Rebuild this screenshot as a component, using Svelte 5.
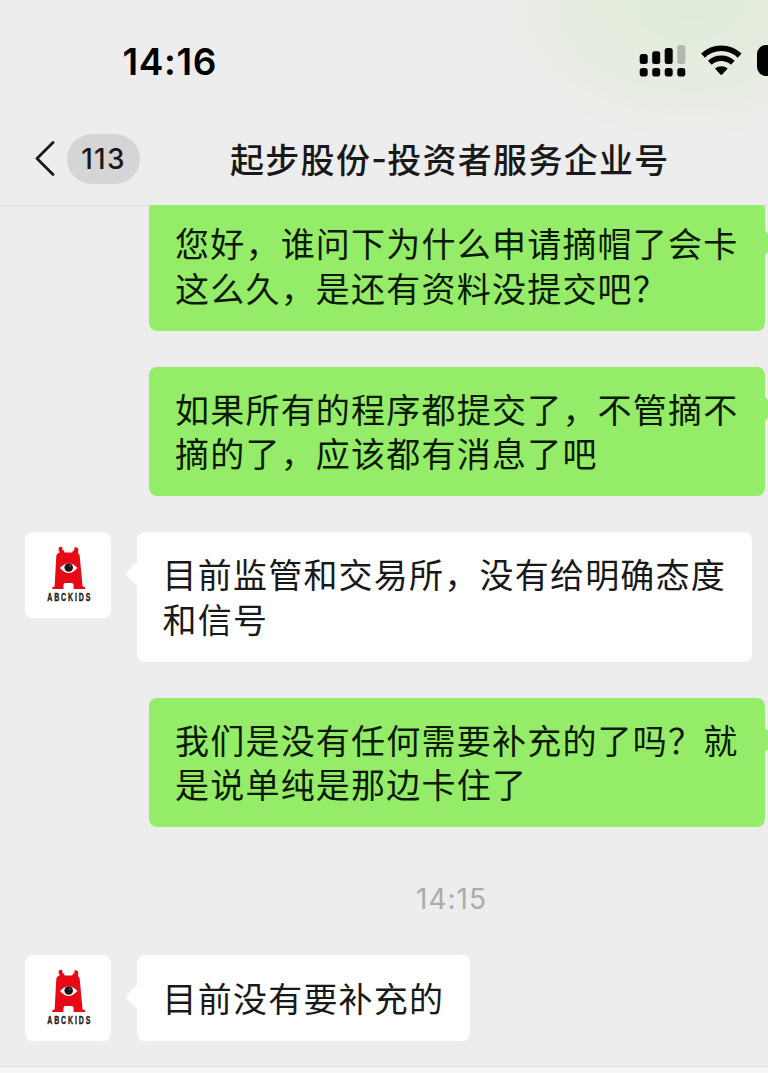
<script>
  const messages = [
    { side: 'out', lines: ['您好，谁问下为什么申请摘帽了会卡', '这么久，是还有资料没提交吧？'] },
    { side: 'out', lines: ['如果所有的程序都提交了，不管摘不', '摘的了，应该都有消息了吧'] },
    { side: 'in', lines: ['目前监管和交易所，没有给明确态度', '和信号'] },
    { side: 'out', lines: ['我们是没有任何需要补充的了吗？就', '是说单纯是那边卡住了'] },
    { side: 'time', text: '14:15' },
    { side: 'in', lines: ['目前没有要补充的'] },
  ];

  const unread = 113;
</script>

<div class="screen">
  <header>
    <div class="status">
      <span class="clock">14:16</span>
      <svg class="indicators" width="130" height="36" viewBox="0 0 130 36">
        <rect x="1.7" y="12" width="8" height="10" rx="2.5" />
        <rect x="14.2" y="9.3" width="8" height="12.7" rx="2.5" />
        <rect x="26.7" y="6" width="8" height="16" rx="2.5" />
        <rect x="39.3" y="3" width="8" height="19" rx="2.5" opacity="0.22" />
        {#each [1.7, 14.2, 26.7, 39.3] as x}
          <rect {x} y="26" width="8" height="8.5" rx="2.8" />
        {/each}
        <g fill="none" stroke="#000" stroke-width="5.6">
          <path d="M65 13.6A26.5 26.5 0 0 1 101.6 13.6" />
          <path d="M71.8 20.8A17 17 0 0 1 94.8 20.8" />
        </g>
        <path d="M76.9 26.6A9.6 9.6 0 0 1 89.7 26.6L84.2 32.4Q83.3 33.2 82.4 32.4Z" />
        <rect x="119" y="3" width="50" height="31" rx="9" />
      </svg>
    </div>
    <div class="nav">
      <svg class="back" width="20" height="36" viewBox="0 0 20 36">
        <path d="M18 1.5L2 17.5L18 33.5" />
      </svg>
      <span class="unread">{unread}</span>
      <h1>起步股份<span class="dash">-</span>投资者服务企业号</h1>
    </div>
  </header>

  <main>
    {#each messages as msg}
      {#if msg.side === 'time'}
        <div class="time">{msg.text}</div>
      {:else}
        <div class="row {msg.side}">
          {#if msg.side === 'in'}
            <svg class="avatar" width="86" height="86" viewBox="0 0 86 86">
              <g fill="#e60a17">
                <path d="M31.3 24Q31.8 20.5 35.5 20.5H50.5Q54.3 20.5 54.7 24L57.6 54.5L60 55V57H48.6V53Q48.6 51 46.5 51H40.5Q38.5 51 38.5 53V57H27.3V55.3L29.6 54.5Z" />
                <path d="M34.5 22V20Q33 18 33.8 16Q35 14 37.5 15.2Q36.5 17.5 39 18.8L40 22Z" />
                <path d="M53 22V20Q53.6 18 53 16.2Q51 14.7 49 15.8Q50.5 17.5 47.8 19L46.8 22Z" />
              </g>
              <path d="M35 36Q43.7 26.500 52.4 36Q43.7 46 35 36Z" fill="#fff" />
              <circle cx="43.7" cy="35.500" r="4.300" fill="#1b1415" />
              <circle cx="45" cy="34" r="0.8" fill="#888" />
              <text transform="translate(22.300 68.500) scale(0.700 1)" textLength="61.500">ABCKIDS</text>
            </svg>
          {/if}
          <div class="bubble">
            {#each msg.lines as line}
              <p>{line}</p>
            {/each}
          </div>
        </div>
      {/if}
    {/each}
  </main>

  <footer></footer>
</div>

<style>
  :global(body) {
    margin: 0;
    background: #ededed;
  }

  .screen {
    display: flex;
    flex-direction: column;
    width: 768px;
    height: 1073px;
    overflow: hidden;
    background: #ededed;
    color: #191919;
    font-family: Inter, 'Noto Sans CJK SC', sans-serif;
  }

  header {
    flex: none;
    box-sizing: border-box;
    height: 206px;
    border-bottom: 1px solid #dedede;
    background:
      radial-gradient(ellipse 210px 140px at 690px 5px, #dfecd9 0%, #e5ecdf 45%, rgba(237, 237, 237, 0) 100%),
      #ededed;
  }

  .status {
    display: flex;
    align-items: flex-start;
    justify-content: space-between;
    height: 86px;
    padding: 42px 0 0 122.5px;
    box-sizing: border-box;
  }

  .clock {
    color: #000;
    font-size: 37px;
    font-weight: 600;
    line-height: 40px;
    letter-spacing: 0.6px;
  }

  .nav {
    display: flex;
    align-items: center;
    height: 146px;
    padding-left: 35px;
  }

  .back {
    fill: none;
    stroke: #191919;
    stroke-width: 2.8;
    stroke-linecap: round;
    stroke-linejoin: round;
  }

  .unread {
    width: 73px;
    height: 50px;
    margin-left: 12px;
    border-radius: 25px;
    background: #d5d5d5;
    font-size: 28px;
    font-weight: 500;
    line-height: 51px;
    letter-spacing: 1.2px;
    text-align: center;
  }

  h1 {
    display: flex;
    margin: 0 0 0 90px;
    font-family: 'Noto Sans CJK SC', sans-serif;
    font-size: 34px;
    font-weight: 500;
    line-height: 50px;
    letter-spacing: 1.3px;
    white-space: nowrap;
  }

  .dash {
    width: 16px;
    font-family: Inter, sans-serif;
    text-align: center;
  }

  main {
    display: flex;
    flex: 1;
    flex-direction: column;
    gap: 36px;
    min-height: 0;
    margin-top: -5px;
    clip-path: inset(4px 0 0 0);
  }

  .row {
    display: flex;
    align-items: flex-start;
    padding-left: 25px;
  }

  .row.out {
    justify-content: flex-end;
    padding-right: 3.5px;
  }

  .avatar {
    margin-right: 25.5px;
    border-radius: 8px;
    background: #fff;
  }

  .avatar text {
    fill: #222;
    stroke: #222;
    stroke-width: 0.4px;
    font-family: 'Liberation Sans', sans-serif;
    font-size: 10px;
    font-weight: 700;
  }

  .bubble {
    position: relative;
    padding: 20.3px 25.5px 20.7px 26px;
    border-radius: 8px;
    background: #fff;
  }

  .bubble::before {
    position: absolute;
    top: 32px;
    left: -8px;
    width: 20px;
    height: 20px;
    border-radius: 4px;
    background: inherit;
    content: '';
    transform: rotate(45deg);
  }

  .out .bubble {
    padding: 20.3px 26px 20.7px 25.5px;
    background: #95ec69;
    color: #0b1a05;
  }

  .out .bubble::before {
    right: -8px;
    left: auto;
  }

  p {
    margin: 0;
    font-family: 'Noto Sans CJK SC', sans-serif;
    font-size: 34px;
    line-height: 44.3px;
    letter-spacing: 1.22px;
    white-space: nowrap;
  }

  .time {
    height: 56px;
    padding-left: 135px;
    color: #ababab;
    font-size: 28px;
    line-height: 73px;
    letter-spacing: 1px;
    text-align: center;
  }

  footer {
    flex: none;
    height: 6px;
    border-top: 1px solid #dcdcdc;
    background: #f6f6f6;
  }
</style>
